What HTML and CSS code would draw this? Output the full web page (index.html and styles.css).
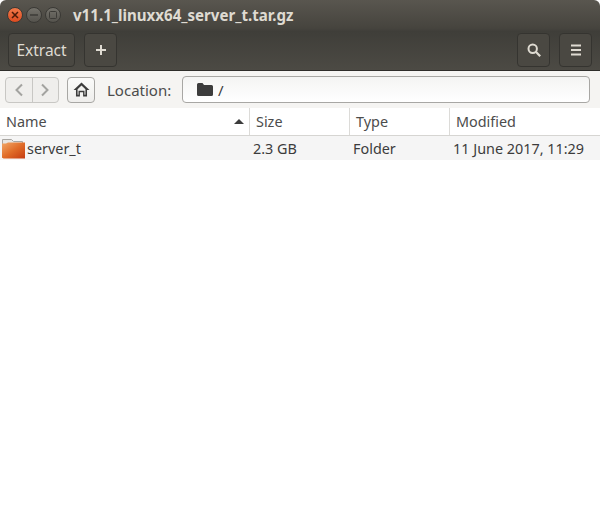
FILE: index.html
```html
<!DOCTYPE html>
<html lang="en">
<head>
<meta charset="utf-8">
<title>v11.1_linuxx64_server_t.tar.gz</title>
<link rel="stylesheet" href="styles.css">
</head>
<body>
<div class="window">
  <header class="headerbar">
    <div class="titlebar">
      <div class="wm">
        <span class="wm-btn close"><svg viewBox="0 0 8 8" width="8" height="8"><path d="M1 1l6 6M7 1l-6 6" stroke="#4a1a08" stroke-width="1.5"/></svg></span>
        <span class="wm-btn"><svg viewBox="0 0 8 8" width="8" height="8"><path d="M0 4h8" stroke="#3c3b37" stroke-width="1.5"/></svg></span>
        <span class="wm-btn"><svg viewBox="0 0 8 8" width="8" height="8"><rect x=".5" y=".5" width="7" height="7" rx="1" fill="none" stroke="#3c3b37"/></svg></span>
      </div>
      <div class="title">v11.1_linuxx64_server_t.tar.gz</div>
    </div>
    <div class="toolbar">
      <button class="tb-btn extract">Extract</button>
      <button class="tb-btn square"><svg viewBox="0 0 12 12" width="12" height="12"><path d="M6 1v10M1 6h10" stroke="#dfdbd2" stroke-width="2"/></svg></button>
      <div class="spacer"></div>
      <button class="tb-btn square"><svg viewBox="0 0 16 16" width="16" height="16"><circle cx="6.7" cy="6.7" r="4.2" fill="none" stroke="#dfdbd2" stroke-width="2"/><path d="M9.8 9.8l4.4 4.4" stroke="#dfdbd2" stroke-width="2.2"/></svg></button>
      <button class="tb-btn square"><svg viewBox="0 0 12 12" width="12" height="12"><path d="M1 1.500h10M1 6h10M1 10.500h10" stroke="#dfdbd2" stroke-width="2"/></svg></button>
    </div>
  </header>
  <div class="locbar">
    <div class="nav">
      <span class="nav-btn"><svg viewBox="0 0 10 14" width="10" height="14"><path d="M8 1.500L2.500 7 8 12.500" fill="none" stroke="#a3a3a0" stroke-width="2"/></svg></span>
      <span class="nav-btn"><svg viewBox="0 0 10 14" width="10" height="14"><path d="M2 1.500L7.500 7 2 12.500" fill="none" stroke="#a3a3a0" stroke-width="2"/></svg></span>
    </div>
    <span class="home"><svg viewBox="0 0 16 14" width="17" height="15"><path d="M8 .5L.5 7.500h2.300v6h3.700V9.500h3v4h3.700v-6h2.300z" fill="#3c3c3c"/><path d="M8 3.200L4.300 6.800V12h.9V8.200h5.600V12h.9V6.800z" fill="#f0f0ee"/></svg></span>
    <span class="loc-label">Location:</span>
    <div class="loc-entry">
      <svg class="loc-folder" viewBox="0 0 16 13" width="16" height="13"><path d="M0 1.500Q0 0 1.500 0h4L7 2h7.500Q16 2 16 3.500v8q0 1.500-1.500 1.500h-13Q0 13 0 11.500z" fill="#3c3c3c"/></svg>
      <span class="path">/</span>
    </div>
  </div>
  <div class="table">
    <div class="thead">
      <div class="th c-name">Name<svg class="sort" viewBox="0 0 10 5" width="10" height="5"><path d="M5 0l5 5H0z" fill="#3c3c3c"/></svg></div>
      <div class="th c-size">Size</div>
      <div class="th c-type">Type</div>
      <div class="th c-mod">Modified</div>
    </div>
    <div class="row">
      <div class="td c-name first">
        <svg class="file-icon" viewBox="0 0 24 24" width="24" height="24">
          <defs>
            <linearGradient id="fg" x1="0" y1="0" x2="1" y2="1">
              <stop offset="0" stop-color="#f2a868"/>
              <stop offset=".5" stop-color="#e06c28"/>
              <stop offset="1" stop-color="#c43a10"/>
            </linearGradient>
          </defs>
          <path d="M1.500 3.500h9l2 2h9v16h-20z" fill="#e8e6e2" stroke="#a8a6a2"/>
          <path d="M1 7.500h4l2-1h17.500v16H2.500L1 21.500z" fill="url(#fg)"/>
        </svg>
        <span>server_t</span>
      </div>
      <div class="td c-size">2.3 GB</div>
      <div class="td c-type">Folder</div>
      <div class="td c-mod">11 June 2017, 11:29</div>
    </div>
  </div>
</div>
</body>
</html>
```
FILE: styles.css
```css
* { box-sizing: border-box; }
html, body { margin: 0; padding: 0; }
body {
  width: 600px;
  height: 508px;
  overflow: hidden;
  background: #fff;
  font-family: "Noto Sans", "Open Sans", sans-serif;
  font-size: 14.4px;
  color: #3c3c3c;
}
.window { width: 600px; height: 508px; background: #fff; display: flex; flex-direction: column; }
.headerbar {
  height: 71px;
  background: linear-gradient(#59564f 0, #46443e 40%, #3f3e39 45%, #4c4a44 100%);
  border-radius: 6px 6px 0 0;
  border-bottom: 1px solid #2e2d2a;
}
.titlebar { height: 29px; display: flex; align-items: center; padding-left: 7px; }
.wm { display: flex; gap: 3px; }
.wm-btn {
  width: 16px; height: 16px; border-radius: 50%;
  background: linear-gradient(#74726b, #55534d);
  border: 1px solid #3a3935;
  display: flex; align-items: center; justify-content: center;
}
.wm-btn.close { background: linear-gradient(#f27a4a, #dc4b20); border-color: #3a3935; }
.title { margin-left: 12px; color: #dfdbd2; font-weight: 700; font-size: 15.1px; }
.toolbar { height: 37px; display: flex; align-items: flex-start; padding: 4px 8px 0 8px; gap: 9px; }
.spacer { flex: 1; }
.tb-btn {
  height: 34px;
  background: #4a4842;
  border: 1px solid #353430;
  border-radius: 4px;
  color: #dfdbd2;
  font: inherit;
  font-size: 15.500px;
  padding: 0;
  display: flex; align-items: center; justify-content: center;
}
.tb-btn.extract { width: 67px; }
.tb-btn.square { width: 33px; }
.locbar {
  height: 37px;
  background: #f5f4f2;
  display: flex;
  align-items: center;
  padding: 0 10px 0 5px;
}
.nav {
  display: flex;
  width: 54px; height: 26px;
  border: 1px solid #c8c7c4;
  border-radius: 4px;
  background: #efeeec;
}
.nav-btn { flex: 1; display: flex; align-items: center; justify-content: center; }
.nav-btn + .nav-btn { border-left: 1px solid #c8c7c4; }
.home {
  width: 28px; height: 26px; margin-left: 8px;
  border: 1px solid #a8a7a4; border-radius: 4px;
  background: linear-gradient(#fbfbfa, #efeeec);
  display: flex; align-items: center; justify-content: center;
}
.loc-label { margin-left: 12px; width: 75px; color: #4c4c4c; font-size: 15px; }
.loc-entry {
  flex: 1; height: 27px;
  border: 1px solid #a8a7a4; border-radius: 4px;
  background: linear-gradient(#f4f4f3, #fff);
  display: flex; align-items: center; padding-left: 14px;
}
.path { margin-left: 5px; font-size: 15px; }
.table { flex: 1; display: flex; flex-direction: column; }
.thead { height: 28px; display: flex; background: #fff; border-bottom: 1px solid #d6d5d2; }
.th {
  display: flex; align-items: center;
  padding-left: 6px;
  color: #4c4c4c;
  border-right: 1px solid #dcdbd8;
}
.th:last-child { border-right: 0; }
.c-name { width: 250px; }
.c-size { width: 100px; }
.c-type { width: 100px; }
.c-mod { flex: 1; }
.sort { margin-left: auto; margin-right: 5px; }
.row { height: 24px; display: flex; background: #f5f5f5; }
.td { display: flex; align-items: center; padding-left: 3px; color: #3c3c3c; }
.td.first { padding-left: 1px; gap: 2px; }
.file-icon { flex: none; }
```
